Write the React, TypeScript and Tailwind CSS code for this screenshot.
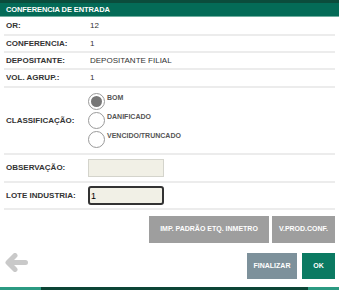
import { useState } from 'react'

const font = { fontFamily: '"Liberation Sans", Arial, sans-serif' }

function InfoRow({ label, value, h }: { label: string; value: string; h: string }) {
  return (
    <div className={`flex items-center ${h} border-b-2 border-[#ececec] pl-[2px]`}>
      <span className="w-[84px] text-[8px] font-bold text-[#333]">{label}</span>
      <span className="text-[8px] text-[#333]">{value}</span>
    </div>
  )
}

function Radio({ label, checked, onClick }: { label: string; checked: boolean; onClick: () => void }) {
  return (
    <button onClick={onClick} className="flex items-center gap-[2px] h-[19px]">
      <span className="w-[17px] h-[17px] rounded-full border border-[#9a9a9a] bg-white flex items-center justify-center">
        {checked && <span className="w-[11px] h-[11px] rounded-full bg-[#777]" />}
      </span>
      <span className="text-[7px] font-bold text-[#555] -mt-[6px]">{label}</span>
    </button>
  )
}

export default function App() {
  const [cls, setCls] = useState('BOM')
  const [lote, setLote] = useState('1')

  return (
    <div style={font} className="w-[339px] h-[290px] bg-white flex flex-col overflow-hidden">
      {/* Header */}
      <div className="border-t-[3px] border-[#0b4c3c] bg-[#046b57] h-[17px] border-b border-b-[#6fae9f] flex items-center px-[6px]">
        <span className="text-[7.5px] font-bold text-white tracking-[-0.1px]">CONFERENCIA DE ENTRADA</span>
      </div>

      <div className="flex flex-col px-[4px]">
        <InfoRow label="OR:" value="12" h="h-[19px]" />
        <InfoRow label="CONFERENCIA:" value="1" h="h-[17px]" />
        <InfoRow label="DEPOSITANTE:" value="DEPOSITANTE FILIAL" h="h-[17px]" />
        <InfoRow label="VOL. AGRUP.:" value="1" h="h-[18px]" />

        <div className="flex items-center h-[67px] border-b-2 border-[#ececec] pl-[2px]">
          <span className="w-[82px] text-[8px] font-bold text-[#333]">CLASSIFICAÇÃO:</span>
          <div className="flex flex-col">
            {['BOM', 'DANIFICADO', 'VENCIDO/TRUNCADO'].map(o => (
              <Radio key={o} label={o} checked={cls === o} onClick={() => setCls(o)} />
            ))}
          </div>
        </div>

        <div className="flex items-center h-[28px] border-b-2 border-[#ececec] pl-[2px]">
          <span className="w-[82px] text-[8px] font-bold text-[#333]">OBSERVAÇÃO:</span>
          <input className="w-[76px] h-[18px] bg-[#f1f0e6] border border-[#d4d4cc] outline-none" />
        </div>

        <div className="flex items-center h-[27px] border-b-2 border-[#ececec] pl-[2px]">
          <span className="w-[82px] text-[8px] font-bold text-[#333]">LOTE INDUSTRIA:</span>
          <input
            value={lote}
            onChange={e => setLote(e.target.value)}
            className="w-[76px] h-[19px] bg-[#f1f0e6] border-2 border-[#333] rounded-[3px] px-[1px] text-[9px] outline-none"
          />
        </div>

        <div className="flex justify-end gap-[3px] pt-[6px]">
          <button className="w-[120px] h-[27px] bg-[#9e9e9e] text-white text-[7px] font-bold">IMP. PADRÃO ETQ. INMETRO</button>
          <button className="w-[63px] h-[27px] bg-[#9e9e9e] text-white text-[7px] font-bold">V.PROD.CONF.</button>
        </div>

        <div className="flex items-start pt-[10px]">
          <svg width="23" height="19" viewBox="0 0 23 19" className="ml-[1px]">
            <path d="M10 2.5 L3 9.5 L10 16.5 M4 9.5 H20.5" stroke="#c9c9c9" strokeWidth="5" fill="none" strokeLinecap="round" strokeLinejoin="round" />
          </svg>
          <div className="flex-1" />
          <button className="w-[50px] h-[26px] bg-[#7d919b] text-white text-[7px] font-bold">FINALIZAR</button>
          <button className="w-[33px] h-[26px] ml-[5px] bg-[#0b7a62] text-white text-[7px] font-bold">OK</button>
        </div>
      </div>

      <div className="mt-auto flex h-[3px]">
        <div className="w-[41px] bg-[#2b9a82]" />
        <div className="flex-1 bg-[#0c4536]" />
        <div className="w-[31px] bg-[#2b9a82]" />
      </div>
    </div>
  )
}
